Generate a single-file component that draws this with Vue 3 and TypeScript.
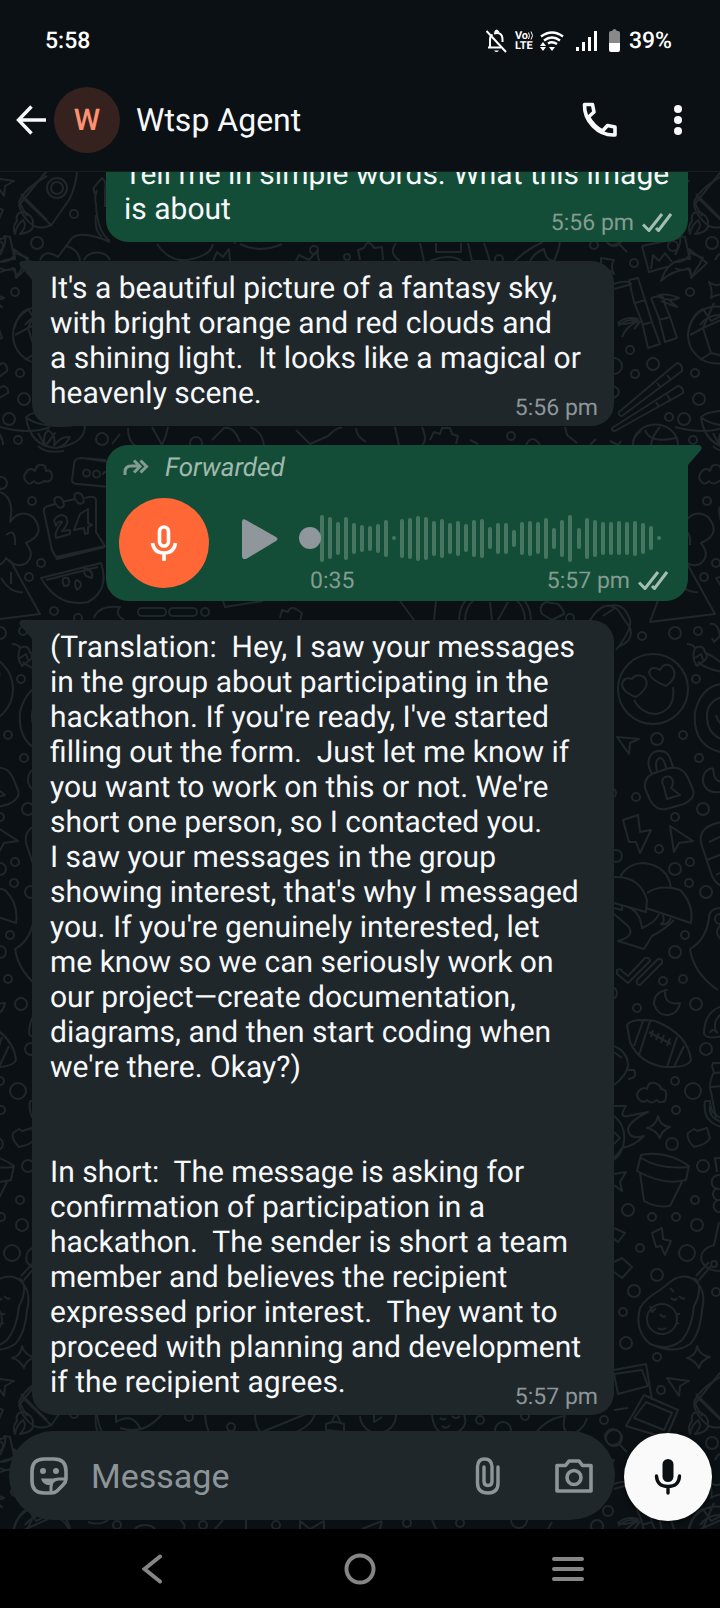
<script setup lang="ts">
import { ref } from 'vue'

interface Message {
  id: number
  side: 'in' | 'out'
  kind: 'text' | 'voice'
  time: string
  text?: string
  tail: boolean
}

const messages: Message[] = [
  {
    id: 1,
    side: 'out',
    kind: 'text',
    time: '5:56 pm',
    tail: false,
    text: 'Tell me in simple words. What this image\nis about',
  },
  {
    id: 2,
    side: 'in',
    kind: 'text',
    time: '5:56 pm',
    tail: true,
    text: "It's a beautiful picture of a fantasy sky,\nwith bright orange and red clouds and\na shining light.  It looks like a magical or\nheavenly scene.",
  },
  { id: 3, side: 'out', kind: 'voice', time: '5:57 pm', tail: true },
  {
    id: 4,
    side: 'in',
    kind: 'text',
    time: '5:57 pm',
    tail: true,
    text: "(Translation:  Hey, I saw your messages\nin the group about participating in the\nhackathon. If you're ready, I've started\nfilling out the form.  Just let me know if\nyou want to work on this or not. We're\nshort one person, so I contacted you.\nI saw your messages in the group\nshowing interest, that's why I messaged\nyou. If you're genuinely interested, let\nme know so we can seriously work on\nour project—create documentation,\ndiagrams, and then start coding when\nwe're there. Okay?)\n\n\nIn short:  The message is asking for\nconfirmation of participation in a\nhackathon.  The sender is short a team\nmember and believes the recipient\nexpressed prior interest.  They want to\nproceed with planning and development\nif the recipient agrees.",
  },
]

const wave: number[] = [
  47, 42, 33, 43, 31, 27, 25, 29, 37, 4, 39, 41, 45, 43, 35, 39, 31, 35, 28, 37, 39, 22, 31, 31,
  17, 33, 35, 32, 41, 21, 37, 47, 21, 41, 37, 33, 33, 34, 33, 35, 31, 24, 4,
]

const draft = ref('')
const progress = ref(0)

// Wallpaper: one tile of doodles, repeated every 675 x 1200.
const tiles: [number, number][] = [
  [-675, -1200], [0, -1200], [-675, 0], [0, 0], [675, 0], [-675, 1200], [0, 1200], [675, 1200],
]

const dots: [number, number, number][] = [
  [673, 246, 5], [712, 243, 6], [634, 263, 4], [690, 292, 4], [630, 350, 4], [653, 364, 6],
  [635, 374, 4], [695, 373, 4], [699, 399, 6], [669, 417, 4], [684, 419, 6], [693, 440, 4],
  [707, 501, 4], [716, 563, 4], [704, 577, 4], [614, 366, 8], [642, 636, 4], [675, 633, 6],
  [698, 631, 4], [696, 679, 4], [657, 739, 6], [683, 735, 4], [699, 758, 4], [636, 797, 4],
  [703, 809, 6], [675, 817, 4], [659, 849, 4], [616, 856, 6], [690, 862, 4], [675, 869, 6],
  [689, 883, 4], [706, 892, 6], [685, 935, 4], [675, 952, 6], [663, 981, 4], [683, 979, 4],
  [696, 1004, 6], [637, 1008, 4], [611, 993, 6], [611, 793, 5], [706, 1049, 6], [675, 1081, 4],
  [693, 1091, 8], [676, 1110, 4], [672, 1144, 6], [703, 1166, 6], [695, 1200, 4], [628, 1210, 6],
  [652, 1217, 4], [676, 1217, 4], [697, 1225, 6], [640, 1248, 4], [687, 1253, 8], [657, 1275, 6],
  [634, 1291, 6], [716, 1292, 4], [623, 1312, 4], [626, 1343, 6], [657, 1357, 4], [661, 1390, 4],
  [604, 1420, 4], [613, 1437, 8], [74, 214, 4], [102, 439, 6], [676, 483, 6], [54, 611, 4],
  [78, 618, 4], [314, 250, 4], [347, 257, 3], [499, 259, 4], [594, 245, 4], [196, 443, 6],
  [511, 436, 4], [205, 612, 4], [570, 618, 4], [189, 217, 4], [231, 227, 4], [117, 325, 4],
  [203, 325, 4], [276, 325, 4], [407, 323, 4], [460, 323, 4], [597, 326, 6], [480, 220, 4],
  [525, 216, 4], [519, 320, 8], [608, 311, 5], [503, 230, 8],
]

const doodles: string[] = [
  // rocket and flame
  'M19 205 L45 173 Q60 160 77 158 Q79 180 69 200 L52 224 Q44 230 34 226 Q22 218 19 205z M23 198 L52 226 M47 188 a10 10 0 1 1 20 0 a10 10 0 1 1 -20 0 M51 188 a6 6 0 1 1 12 0 a6 6 0 1 1 -12 0',
  'M15 234 Q12 226 17 221 Q15 212 24 212 Q34 216 33 224 Q34 232 20 234 Q28 226 23 220 Q16 226 15 234z',
  // hand
  'M95 194 Q92 188 96 185 L102 178 Q107 182 105 190 L105 207 M97 190 Q94 198 96 204 Q97 232 110 241',
  // fish and hill
  'M0 255 Q8 240 4 236 L10 237 L14 256 M14 256 Q9 262 0 262 M13 252 L28 258 L24 265 L17 276 L13 268 Q6 272 0 268',
  'M40 260 Q45 248 58 257 L72 238 Q82 230 110 242 M66 246 Q80 250 80 262 M84 260 a14 12 0 0 1 26 0',
  'M157 244 q12 18 30 16 q24 -4 26 -16 M240 244 q20 10 42 0 M213 261 l4 -9 l6 5 l6 -8 l1 12 M296 261 l3 -6 l10 5 l8 -9 l2 10',
  'M360 260 l-2 -10 l6 -2 q4 -10 10 0 l8 -1 l1 13 M396 243 q-8 10 4 18 M420 243 l4 18 M436 243 v9 h25 v-9 M430 261 q20 -8 32 0 M468 243 l4 18 h18 l-6 -18',
  'M515 261 q12 -12 28 -19 M530 261 q4 -8 14 -12 q2 12 10 12 q4 -8 6 -19',
  // picture with arrow
  'M642 246 L680 238 M642 246 L649 272 L670 266 M651 269 L653 255 L659 261 L665 253 L672 262 M661 281 Q668 258 690 259 L689 249 L707 263 L691 278 L690 269 Q672 270 661 281z',
  'M601 258 L614 260 Q610 266 614 274 Q606 266 601 272z M709 282 Q716 288 722 283 Q720 290 725 295 Q718 293 711 298 Q713 290 709 282z',
  // bamboo
  'M629 280 L638 278 L645 300 L652 322 L660 344 L648 348 L642 322 L634 302z M635 303 L645 300 M642 325 L652 322 M614 284 Q624 280 631 283 M614 289 L632 284 M618 323 Q626 316 638 319 Q628 326 618 323z M622 337 Q626 326 639 321 M651 298 L662 295 L665 303 M651 298 L659 318 L665 342 L677 338 L670 317 L664 302 M659 320 L670 317 M659 295 Q668 293 679 298 Q670 302 659 297z M668 299 L677 307 L661 301',
  // football globe
  'M688 335 a28 28 0 1 1 57 0 a28 28 0 1 1 -57 0 M703 328 L714 303 M703 328 L690 335 M703 328 L732 315 M703 328 L711 353 M711 353 L728 357 L738 330 M711 353 L700 360',
  // chopsticks
  'M619 412 L677 363 Q683 364 682 371 L622 416 Q618 416 619 412z M612 428 L678 386 Q684 387 683 393 L615 431 Q611 431 612 428z M657 383 l4 5 M667 375 l4 5 M656 402 l3 5 M667 395 l4 6',
  // ball
  'M633 445 a22 20 0 0 1 45 0 M645 430 Q650 444 676 438 M660 427 Q652 436 651 445 M610 441 l8 4 l3 -4 M614 386 q10 6 0 12',
  // bowl with leaves
  'M26 417 Q30 446 56 448 Q84 444 85 427 Q80 412 56 411 Q34 410 26 417 Q40 430 84 424 M38 446 Q46 454 64 451 M38 433 L45 446 L55 433 L48 443 M45 446 Q42 436 48 430 Q57 436 54 446 M54 446 Q60 436 70 437 Q66 446 56 448',
  // cloud
  'M28 483 q-7 -5 -1 -12 q4 -4 8 0 q2 -9 10 -5 q1 4 1 5 q6 -2 6 6 q-1 6 -8 4 q-6 5 -10 0 q-4 4 -6 2z',
  // cassette
  'M110 462 L82 458 Q74 458 74 464 L72 480 Q72 484 78 484 L110 487 M83 473 a3 3 0 1 1 7 0 a3 3 0 1 1 -7 0 M93 474 a3 3 0 1 1 7 0 a3 3 0 1 1 -7 0 M103 475 a3 3 0 1 1 6 0 M82 458 L106 460',
  // calendar
  'M55 504 L48 506 Q43 507 44 512 L52 550 L56 557 L105 546 L96 532 L96 500 Q95 496 89 497 L85 498 M62 502 L75 499 M55 503 q-2 -6 3 -6 q5 0 6 8 q-2 4 -6 2z M75 499 q-2 -6 3 -6 q5 0 6 8 q-2 4 -6 2z M54 520 q6 -8 12 -3 q4 6 -4 14 l8 -1 v4 l-14 4 q-2 -6 6 -16 q-4 -2 -6 4z M80 514 l-6 16 l10 -2 l1 6 l3 -1 v-6 l4 -2 l-4 -2 v-14z M53 552 L57 559 L105 547',
  // watermelon
  'M41 578 L101 563 Q110 590 88 602 Q58 608 41 578z M46 580 L98 567 M64 586 q-4 -10 4 -8 q4 8 -4 8z M77 590 q-4 -8 0 -10 q8 4 0 10z M86 576 q-4 -6 0 -8 q8 4 6 10z',
  // flower and triangle
  'M675 492 Q690 498 685 522 Q695 508 708 517 Q722 534 701 543 Q711 556 700 564 Q690 568 681 558 Q675 570 665 560 M681 535 q10 -8 9 10 M685 560 L715 614 L650 622 L672 562 M676 578 q10 16 22 14 M686 572 l0 12',
  // pill, moon, dashes
  'M94 618 Q98 605 120 607 Q114 614 124 620 M142 608 h20 a4 4 0 0 1 0 8 h-20 a4 4 0 0 1 0 -8z M173 608 h20 a4 4 0 0 1 0 8 h-20 a4 4 0 0 1 0 -8z M223 601 l2 6 l38 -6 M280 618 l2 -8 l6 2 q2 -6 8 -3 l6 4 l-2 8 M400 601 l14 19 M436 601 l-2 19 M459 620 a32 30 0 0 1 72 0 M465 620 a26 25 0 0 1 60 0 M490 602 l2 18 M508 602 l-10 18 M542 614 q-4 -8 4 -12 l12 2 q6 6 6 10 l-12 6z M590 620 q14 -22 28 -10 l12 18 q4 12 -10 18 M610 606 q14 -4 20 14 q2 10 -14 30 M603 616 l12 -8',
  'M0 427 q30 8 50 0 M112 444 l8 -10 M128 428 q0 14 8 18 M152 427 l10 18 M168 427 q-2 10 -6 18 M212 440 l12 -12 q10 -2 16 14 M250 427 q12 4 14 18 M296 430 l14 14 l18 -8 q10 -10 14 -8 M356 428 q0 8 10 14 M395 427 l4 18 M422 427 q6 14 0 18 M430 440 l4 -8 l6 2 l2 -6 l8 0 l2 6 l6 2 l-2 8 M470 440 l8 4 M526 445 q6 -12 14 0 M565 427 l2 8 l10 8 M590 445 l6 -6 M633 441 a22 20 0 0 1 8 -10',
  // heart-eyes face
  'M618 689 a35 35 0 1 1 70 0 a35 35 0 1 1 -70 0 M636 697 Q622 692 622 684 Q624 676 632 679 Q636 673 644 677 Q652 686 636 697z M666 686 Q650 680 649 672 Q652 665 660 670 Q664 662 671 666 Q680 676 666 686z M634 700 Q642 714 656 714 Q676 710 673 687',
  // chillies and ring
  'M687 644 q6 0 8 4 M695 648 q8 -4 10 4 q4 4 0 8 l-8 6 q-6 -8 -2 -18z M703 660 l-2 -6 l-6 4 M698 662 Q706 670 730 673 M704 652 Q718 658 728 670 M710 624 q8 -2 10 12 l-6 6 l-2 -4',
  'M725 684 Q702 684 695 712 Q692 748 725 753 M722 697 Q706 702 707 718 Q708 736 725 740 M716 715 q2 8 8 10',
  // pointers
  'M617 737 L639 739 L630 743 L629 754z M670 826 L693 841 L679 843 L674 852z M667 1378 L689 1381 L680 1386 L679 1396z',
  // padlock
  'M652 774 L666 769 Q682 764 688 778 L693 790 Q696 798 684 804 L666 809 Q656 811 650 800 L645 788 Q644 778 652 774z M652 774 Q644 760 654 752 Q666 748 670 758 L673 767 M657 771 Q654 760 660 758 Q664 758 666 768 M664 787 Q660 780 665 777 Q671 775 673 781 Q673 786 671 788 L680 795 L667 799z',
  // moons
  'M713 768 Q702 770 703 782 Q706 794 721 792 M713 768 Q714 784 724 781 M667 990 Q654 992 654 1004 Q658 1016 668 1015 Q678 1014 680 1003 Q664 1006 665 990z',
  // bolts
  'M623 820 L638 815 L640 832 L651 830 L640 853 L636 842 L629 842z M652 1233 L662 1228 L663 1239 L671 1241 L665 1255 L661 1246 L656 1247z',
  // pill-shaped roll
  'M722 822 Q698 826 701 843 L712 876 Q716 884 722 886 M709 842 L722 836 M707 860 L722 854 M716 875 L722 872',
  // mushrooms
  'M620 877 Q628 863 644 863 Q668 866 671 888 M614 877 Q640 876 647 900 L646 912 L614 903 M647 893 Q660 884 680 890 Q694 904 691 923 L646 908 M614 914 L628 926 Q636 936 618 941 L644 949 L652 936 Q664 930 674 920 M625 906 Q640 910 642 928 Q656 922 659 914 M663 915 q2 8 -2 9 q6 2 10 -6 M614 908 l8 2 v-4',
  // pear
  'M722 908 Q709 908 709 918 Q706 940 690 949 Q694 974 718 990 M720 914 a5 5 0 1 0 0 10 M722 924 q-10 8 0 16',
  // ticks
  'M617 970 q4 -2 5 1 l6 5 L645 958 q5 -1 5 3 L628 983 L617 974z M637 980 L658 959 q5 -1 4 4 L640 985 q-4 0 -3 -5z',
  // rugby ball
  'M627 1025 Q632 1018 655 1021 Q688 1034 691 1060 Q688 1068 665 1067 Q640 1064 630 1042z M643 1021 L634 1046 M650 1021 L639 1055 M684 1046 L674 1067 M677 1037 L667 1067 M649 1032 L671 1044 M653 1030 l-2 7 M659 1033 l-3 7 M664 1035 l-3 8 M670 1038 l-3 8',
  // snail
  'M722 1006 Q704 1012 704 1034 Q708 1040 722 1036 M722 1014 q-10 6 -6 18 M710 1033 q2 -6 8 0',
  // cup edge, bottle
  'M614 1046 Q628 1052 628 1066 Q626 1076 614 1085 M628 1070 l6 0 q4 8 -6 9 M614 1052 l8 6 M712 1066 l1 -3 l12 0 M712 1066 l2 7 l10 -1 M714 1072 Q708 1084 711 1092 L716 1118 M711 1087 l12 -1',
  // clouds, banana
  'M641 1101 q-8 -6 0 -12 q5 -2 6 0 q2 -10 12 -4 q2 2 2 4 q8 0 4 12 q-6 3 -8 -1 q-6 5 -10 0 q-2 3 -6 1z M705 1101 h5 q0 14 14 18 M705 1101 Q702 1122 722 1127 M710 1106 q-2 12 12 16',
  // sun flame, stars
  'M614 1106 l12 0 q-8 12 2 10 l20 -4 q-20 10 -20 18 q2 10 16 6 q-10 10 -22 12 l-8 10 M614 1116 Q626 1126 624 1142 Q622 1154 614 1160 M614 1132 l6 6 l-6 6',
  'M658 1116 Q660 1126 670 1127 Q662 1130 660 1138 Q656 1130 647 1128 Q656 1126 658 1116z M697 1346 Q700 1356 710 1357 Q701 1360 699 1368 Q695 1360 687 1358 Q696 1356 697 1346z M614 1174 l12 -2 l-6 10 l2 9 l-8 -6',
  // small box
  'M688 1133 l6 -4 l3 2 l10 -3 l3 10 q-2 6 -16 9 q-8 -8 -6 -14z M614 1228 l11 5 l-7 9 l-5 -4 M614 1262 l8 -4 l10 9 l-10 11 l-8 -6',
  // flower pot
  'M641 1155 Q666 1150 689 1166 L686 1180 Q664 1186 637 1171z M641 1158 Q660 1170 688 1167 M640 1173 L644 1201 Q656 1208 670 1206 L682 1182',
  // grapes
  'M722 1158 l-7 0 l2 14 M722 1176 a7 7 0 1 0 -2 13 M718 1188 a6 6 0 1 0 2 12 M718 1200 a6 6 0 1 0 4 12',
  // pear with cord
  'M719 1222 L714 1245 Q698 1250 702 1262 Q708 1272 722 1271 M711 1264 a3 3 0 1 1 6 0 a3 3 0 1 1 -6 0 M711 1266 L699 1280 M709 1262 L696 1276 M694 1278 l5 4',
  // avocado
  'M674 1279 Q690 1272 699 1285 Q700 1296 694 1306 Q692 1328 682 1340 Q668 1352 650 1344 Q634 1330 640 1308 Q646 1298 660 1290z M699 1285 Q706 1294 702 1310 Q700 1334 690 1344 Q676 1354 655 1346 M647 1319 a15 15 0 1 1 30 0 a15 15 0 1 1 -30 0 M650 1306 l2 6 l4 -4 M676 1314 l4 0 M676 1322 l3 2 M658 1328 q4 3 8 0 M660 1314 q2 4 6 2 M670 1288 l4 4 M671 1298 q4 4 6 0 M679 1296 q4 4 6 2',
  // polaroids
  'M614 1370 L646 1364 L652 1400 M614 1374 L642 1370 L648 1386 L618 1394z M614 1410 l14 -2 M644 1395 L678 1410 L666 1438 L626 1426z M646 1402 L672 1413 L664 1430 L634 1418z M722 1376 Q700 1388 694 1402 L702 1416 M696 1394 L722 1420',
  // bottom strip
  'M614 230 a8 8 0 1 0 0.1 0 M619 244 l8 8 M96 215 q-2 16 6 22 M116 214 v8 q16 -10 24 6 M120 228 q24 8 42 -14 M205 214 q2 24 10 20 q18 -6 20 10 M255 214 q0 26 24 22 q30 -4 36 -22 M262 232 L306 214 M326 230 v-6 q8 -4 18 0 v8z M332 222 q4 -14 8 0 M360 216 a18 18 0 0 0 36 -2 M374 215 v7 l8 -5 M432 215 q2 20 18 20 q20 -6 14 -20 M440 218 q4 3 6 0 M452 216 q4 4 8 0 M442 226 q4 4 8 -1 M535 234 q12 -16 30 -18 q-4 14 4 18 q14 -2 18 -16 M25 325 a26 26 0 0 1 44 4 M14 329 q4 -16 14 -20 l8 12 l20 -10 q12 6 14 18 M88 322 q12 4 20 -2 M135 329 a12 9 0 0 1 20 0 M180 320 q6 4 4 9 M215 329 l8 -9 M246 320 v9 M300 329 v-8 l10 8 l14 -8 v8 M362 329 l20 -8 M380 329 l2 -8 M432 320 l4 9 M548 329 l4 -7 M618 326 q12 -10 22 -4 l-6 7',
]
</script>

<template>
  <div class="phone">
    <div class="status">
      <span class="clock">5:58</span>
      <span class="status-icons">
        <svg class="bell" width="21" height="24" viewBox="0 0 21 24" fill="none" stroke="#fff" stroke-width="2">
          <path d="M4 18.500V10.500Q4 7 6.500 5.500M8 4.500Q16.500 2.500 16.500 10.500V13M2 18.500H15" />
          <path d="M9 3.500Q10.500 -0.500 12.500 3.500" fill="#fff" />
          <path d="M0.500 2L20 23" />
          <path d="M8 21.500h5q-2.500 3 -5 0z" fill="#fff" stroke="none" />
        </svg>
        <span class="volte">
          <span class="vo">Vo<svg width="6" height="9" viewBox="0 0 6 9" fill="none" stroke="#fff"><path d="M0.500 1.500Q2.500 4.500 0.500 8M3 0.500Q6 4.500 3 8.500" /></svg></span>
          <span>LTE</span>
        </span>
        <svg class="wifi" width="24" height="20" viewBox="0 0 24 20" fill="none" stroke="#fff" stroke-width="2.400">
          <path d="M1 5.500Q12 -2.500 23 5.500M4 9.500Q12 3.500 20 9.500M8 12.500Q12 9.800 17 13" />
          <path d="M9 16h6l-3 4zM0 15l3 -4l3 4zM0 16h6l-3 4z" fill="#fff" stroke="none" />
        </svg>
        <svg class="signal" width="22" height="20" viewBox="0 0 22 20" fill="#fff">
          <path d="M0 16h3v4H0zM6 11h3v9H6zM12 6h3v14h-3zM18 0h3v20h-3z" />
        </svg>
        <svg class="battery" width="11" height="23" viewBox="0 0 11 23">
          <path d="M0 4Q0 2 2 2H3Q5.500 -2 8 2H9Q11 2 11 4V14H0z" fill="#88898b" />
          <path d="M0 14H11V21Q11 23 9 23H2Q0 23 0 21z" fill="#fff" />
        </svg>
        <span>39%</span>
      </span>
    </div>

    <header class="header">
      <button class="back" type="button" aria-label="Back">
        <svg width="30" height="30" viewBox="0 0 30 30" fill="none" stroke="#f7f8fa" stroke-width="3.400">
          <path d="M30 15H3M15.500 1.500L2.500 15L15.500 28.500" />
        </svg>
      </button>
      <span class="avatar">W</span>
      <h1 class="title">Wtsp Agent</h1>
      <button class="call" type="button" aria-label="Call">
        <svg width="36" height="36" viewBox="0 0 36 36" fill="none" stroke="#f7f8fa" stroke-width="3.600" stroke-linejoin="round">
          <path d="M2.500 2.500H10.500L12 10L6.500 15C10 21.500 14 25.500 20.500 29L25.500 23.500L33 25V33C16 34 2 19 2.500 2.500z" />
        </svg>
      </button>
      <button class="more" type="button" aria-label="More options">
        <svg width="10" height="32" viewBox="0 0 10 32" fill="#f7f8fa">
          <circle cx="5" cy="5" r="4" /><circle cx="5" cy="16" r="4" /><circle cx="5" cy="27" r="4" />
        </svg>
      </button>
    </header>

    <main class="chat">
      <svg class="wallpaper" aria-hidden="true">
        <defs>
          <g id="tile">
            <circle v-for="(d, i) in dots" :key="'c' + i" :cx="d[0]" :cy="d[1]" :r="d[2]" />
            <path v-for="(p, i) in doodles" :key="'p' + i" :d="p" />
          </g>
        </defs>
        <g transform="translate(0 -172)">
          <use v-for="(t, i) in tiles" :key="i" href="#tile" :x="t[0]" :y="t[1]" />
        </g>
      </svg>

      <div class="messages">
        <article v-for="m in messages" :key="m.id" class="bubble" :class="[m.side, m.kind, { tailed: m.tail }]">
          <svg v-if="m.tail && m.side === 'in'" class="tail" width="14" height="20" viewBox="0 0 14 20">
            <path d="M14 0H3Q-1 1 1 5L14 20z" />
          </svg>
          <svg v-if="m.tail && m.side === 'out'" class="tail" width="14" height="20" viewBox="0 0 14 20">
            <path d="M0 0H11Q15 1 13 5L0 20z" />
          </svg>

          <div v-if="m.kind === 'text'" class="text">{{ m.text }}<div class="meta">
              <time>{{ m.time }}</time>
              <svg v-if="m.side === 'out'" class="ticks" width="30" height="19" viewBox="0 0 30 19">
                <path d="M1 11.500L7 17.500L20 1M14 15L16.500 17.500L29 1" />
              </svg>
            </div></div>

          <template v-else>
            <div class="forwarded">
              <svg width="26" height="18" viewBox="0 0 26 18">
                <path d="M2 16V13Q2 7 8 7H17M11 1.500L17 7.500L11 13.500M17.500 1.500L23.500 7.500L17.500 13.500" />
              </svg>
              <span>Forwarded</span>
            </div>
            <div class="player">
              <span class="voice-avatar">
                <svg width="28" height="36" viewBox="0 0 28 36" fill="none" stroke="#fff" stroke-width="3.600">
                  <rect x="9.500" y="2" width="9" height="19" rx="4.500" />
                  <path d="M2.500 18Q4 28 14 28Q24 28 25.500 18M14 28V36" />
                </svg>
              </span>
              <button class="play" type="button" aria-label="Play voice message">
                <svg width="36" height="40" viewBox="0 0 36 40"><path d="M0 3Q0 -1 4 1L34 18Q37 20 34 22L4 40Q0 41 0 37z" fill="#8f979c" /></svg>
              </button>
              <div class="track">
                <div class="wave">
                  <i v-for="(h, i) in wave" :key="i" :style="{ height: h + 'px' }"></i>
                  <input v-model.number="progress" type="range" min="0" max="35" aria-label="Seek" />
                </div>
                <div class="track-foot">
                  <span>0:35</span>
                  <div class="meta">
                    <time>{{ m.time }}</time>
                    <svg class="ticks" width="30" height="19" viewBox="0 0 30 19">
                      <path d="M1 11.500L7 17.500L20 1M14 15L16.500 17.500L29 1" />
                    </svg>
                  </div>
                </div>
              </div>
            </div>
          </template>
        </article>
      </div>

      <form class="composer" @submit.prevent>
        <div class="field">
          <button type="button" aria-label="Stickers">
            <svg width="40" height="40" viewBox="0 0 40 40" fill="none" stroke="#8d9599" stroke-width="3.600">
              <path d="M15 3H25Q37 3 37 15V23Q37 26 34 29L28 35Q26 37 22 37H15Q3 37 3 25V15Q3 3 15 3z" />
              <path d="M22 37V31Q22 23 30 23H36" stroke-width="3" />
              <path d="M12 22.500H26L22 29Q14 30 12 22.500z" fill="#8d9599" stroke="none" />
              <circle cx="14" cy="15" r="3" fill="#8d9599" stroke="none" />
              <circle cx="27" cy="15" r="3" fill="#8d9599" stroke="none" />
            </svg>
          </button>
          <input v-model="draft" type="text" placeholder="Message" aria-label="Message" />
          <button type="button" aria-label="Attach">
            <svg width="26" height="40" viewBox="0 0 26 40" fill="none" stroke="#8d9599" stroke-width="3.400" stroke-linecap="round">
              <path d="M23 11V27Q23 37 13 37Q2.500 37 2.500 27V10.500Q3 3 9.500 3Q16.500 3 17 10.500V25Q17 29.500 13 29.500Q9 29.500 9 25V11" />
            </svg>
          </button>
          <button class="camera" type="button" aria-label="Camera">
            <svg width="38" height="34" viewBox="0 0 38 34" fill="none" stroke="#8d9599" stroke-width="3.600" stroke-linejoin="round">
              <path d="M2 6.500H10.500L14 2H24L27.500 6.500H36V32H2z" />
              <circle cx="19" cy="18.500" r="7" />
            </svg>
          </button>
        </div>
        <button class="mic" type="button" aria-label="Record voice message">
          <svg width="28" height="38" viewBox="0 0 28 38" fill="none" stroke="#0b1014" stroke-width="3.400">
            <rect x="8.500" y="1" width="11" height="23" rx="5.500" fill="#0b1014" stroke="none" />
            <path d="M2.500 18Q3 28.500 14 28.500Q25 28.500 25.500 18M14 28.500V35" stroke-linecap="round" />
          </svg>
        </button>
      </form>
    </main>

    <nav class="system">
      <button type="button" aria-label="Back">
        <svg width="20" height="30" viewBox="0 0 20 30"><path d="M18 2.500L2.500 15L18 27.500" /></svg>
      </button>
      <button type="button" aria-label="Home">
        <svg width="32" height="32" viewBox="0 0 32 32"><circle cx="16" cy="16" r="13.500" /></svg>
      </button>
      <button type="button" aria-label="Recent apps">
        <svg width="34" height="26" viewBox="0 0 34 26"><path d="M3 3H31M3 13H31M3 23H31" /></svg>
      </button>
    </nav>
  </div>
</template>

<style>
html,
body {
  background: #0b1014;
}
</style>

<style scoped>
.phone {
  display: flex;
  flex-direction: column;
  height: 100vh;
  overflow: hidden;
  background: #0b1014;
  color: #f7f8fa;
  font-family: Roboto, "Noto Sans", sans-serif;
  text-rendering: geometricPrecision;
}

button {
  display: flex;
  align-items: center;
  justify-content: center;
  padding: 0;
  border: 0;
  background: none;
}

svg {
  display: block;
  flex: none;
}

.status {
  flex: none;
  display: flex;
  align-items: center;
  justify-content: space-between;
  height: 81px;
  padding: 0 48px 0 45px;
  color: #fff;
  font-size: 23px;
  font-weight: 500;
  line-height: 27px;
}

.status-icons {
  display: flex;
  align-items: center;
}

.volte {
  display: flex;
  flex-direction: column;
  width: 19px;
  margin: 0 6px 0 8px;
  font-size: 11px;
  font-weight: 700;
  line-height: 10px;
}

.vo {
  display: flex;
}

.signal {
  margin: 0 11px 0 12px;
}

.battery {
  margin-right: 9px;
}

.header {
  flex: none;
  display: flex;
  align-items: center;
  padding: 6px 37px 18px 16px;
  border-bottom: 1px solid #171e21;
}

.avatar {
  display: flex;
  align-items: center;
  justify-content: center;
  width: 66px;
  height: 66px;
  margin: 0 16px 0 8px;
  border-radius: 50%;
  background: #35221f;
  color: #fd9172;
  font-size: 30px;
  font-weight: 500;
}

.title {
  flex: 1;
  margin: 0;
  font-size: 32px;
  font-weight: 400;
  line-height: 38px;
}

.more {
  margin-left: 55px;
}

.chat {
  position: relative;
  flex: 1;
  display: flex;
  flex-direction: column;
  min-height: 0;
  overflow: hidden;
}

.wallpaper {
  position: absolute;
  inset: 0;
  width: 100%;
  height: 100%;
  fill: none;
  stroke: #20272a;
  stroke-width: 2;
  stroke-linejoin: round;
}

.messages {
  position: relative;
  flex: 1;
  display: flex;
  flex-direction: column;
  justify-content: flex-end;
  gap: 19px;
  min-height: 0;
  padding: 0 32px 16px;
  overflow: hidden;
}

.bubble {
  position: relative;
  flex: none;
  box-sizing: border-box;
  width: calc(100% - 74px);
  padding: 10px 16px 6px 18px;
  border-radius: 22px;
}

.in {
  align-self: flex-start;
  padding-bottom: 5px;
  background: #1f272a;
  fill: #1f272a;
}

.out {
  align-self: flex-end;
  background: #144d37;
  fill: #144d37;
}

.in.tailed {
  border-top-left-radius: 0;
}

.out.tailed {
  border-top-right-radius: 0;
}

.tail {
  position: absolute;
  top: 0;
}

.in .tail {
  right: 100%;
  margin-right: -1px;
}

.out .tail {
  left: 100%;
}

.text {
  display: flow-root;
  font-size: 30px;
  line-height: 35px;
  white-space: pre-wrap;
}

.meta {
  display: flex;
  align-items: center;
  justify-content: flex-end;
  gap: 8px;
  color: #8d969a;
  font-size: 23px;
  line-height: 27px;
  white-space: nowrap;
}

.text .meta {
  float: right;
  margin-top: 17px;
}

.in .text .meta {
  margin-top: 18px;
}

.out .meta {
  color: #829c91;
}

.ticks {
  fill: none;
  stroke: #a4bfb2;
  stroke-width: 3;
}

.voice {
  padding: 8px 20px 7px 13px;
}

.forwarded {
  display: flex;
  align-items: center;
  gap: 16px;
  margin-bottom: 15px;
  padding-left: 4px;
  color: #a0b9ad;
  font-size: 26px;
  font-style: italic;
  line-height: 30px;
}

.forwarded svg {
  fill: none;
  stroke: #829c91;
  stroke-width: 3;
}

.player {
  display: flex;
  align-items: flex-start;
}

.voice-avatar {
  flex: none;
  display: flex;
  align-items: center;
  justify-content: center;
  width: 90px;
  height: 90px;
  border-radius: 50%;
  background: #ff6737;
}

.play {
  height: 82px;
  margin: 0 21px 0 33px;
}

.track {
  flex: 1;
  padding-top: 12px;
}

.wave {
  position: relative;
  display: flex;
  align-items: center;
  justify-content: space-between;
  height: 56px;
  padding: 0 7px 0 21px;
}

.wave i {
  width: 4px;
  border-radius: 2px;
  background: #467660;
}

.wave input {
  position: absolute;
  inset: 0;
  width: 100%;
  margin: 0;
  appearance: none;
  background: none;
}

.wave input::-webkit-slider-thumb {
  appearance: none;
  width: 22px;
  height: 22px;
  border-radius: 50%;
  background: #8f979c;
}

.track-foot {
  display: flex;
  justify-content: space-between;
  margin-top: 1px;
  padding-left: 11px;
  color: #829c91;
  font-size: 23px;
  line-height: 27px;
}

.composer {
  position: relative;
  flex: none;
  display: flex;
  align-items: flex-end;
  gap: 9px;
  padding: 0 8px 8px 9px;
}

.field {
  flex: 1;
  display: flex;
  align-items: center;
  box-sizing: border-box;
  min-width: 0;
  height: 89px;
  margin-bottom: 1px;
  padding: 0 22px 0 20px;
  border-radius: 45px;
  background: #1f272a;
}

.field input {
  flex: 1;
  min-width: 0;
  padding: 0 0 0 22px;
  border: 0;
  outline: 0;
  background: none;
  color: #f7f8fa;
  font: inherit;
  font-size: 34px;
  line-height: 40px;
}

.field input::placeholder {
  color: #8d9599;
  opacity: 1;
}

.camera {
  margin-left: 54px;
}

.mic {
  flex: none;
  width: 88px;
  height: 88px;
  border-radius: 50%;
  background: #fafafa;
  box-shadow: 0 2px 4px rgb(0 0 0 / 50%);
}

.system {
  flex: none;
  display: flex;
  height: 79px;
  padding: 0 48px;
  background: #000;
}

.system button {
  flex: 1;
}

.system svg {
  fill: none;
  stroke: #858585;
  stroke-width: 4;
  stroke-linecap: round;
}
</style>
